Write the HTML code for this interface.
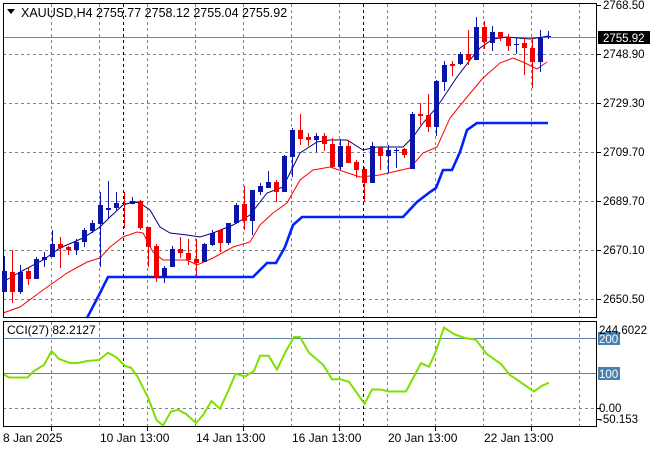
<!DOCTYPE html>
<html><head><meta charset="utf-8"><style>
html,body{margin:0;padding:0;background:#fff;width:660px;height:450px;overflow:hidden}
svg{display:block}
text{font-family:"Liberation Sans",sans-serif;font-size:11.5px;fill:#000}
</style></head><body>
<svg width="660" height="450" viewBox="0 0 660 450" xmlns="http://www.w3.org/2000/svg">
<rect width="660" height="450" fill="#fff"/>
<g stroke="#7d848c" stroke-width="1" stroke-dasharray="3,3" fill="none">
<path d="M51.5 4V317M99.5 4V317M147.5 4V317M195.5 4V317M243.5 4V317M291.5 4V317M339.5 4V317M387.5 4V317M435.5 4V317M483.5 4V317M531.5 4V317M579.5 4V317"/>
<path d="M3 54.5H596M3 103.5H596M3 152.5H596M3 201.5H596M3 250.5H596M3 299.5H596"/>
<path d="M51.5 322V426M99.5 322V426M147.5 322V426M195.5 322V426M243.5 322V426M291.5 322V426M339.5 322V426M387.5 322V426M435.5 322V426M483.5 322V426M531.5 322V426M579.5 322V426"/>
<path d="M3 408.5H596"/>
</g>
<g stroke="#000" stroke-dasharray="3,3"><path d="M123.5 4V317M363.5 4V317M123.5 322V426M363.5 322V426"/></g>
<path d="M3 37.5H596" stroke="#7d848c"/>
<path d="M3 338.5H596M3 373.5H596" stroke="#5a7fa8"/>
<polyline fill="none" stroke="#000080" stroke-width="1" points="3,282 20,272 43,260 60,248 83,238 100,227 110,217 123,205 133,202 140,203 150,210 160,227 170,233 187,235 200,237 213,233 233,225 250,215 267,193 283,187 293,167 300,153 317,142 330,140 347,140 363,150 377,147 403,147 413,137 423,123 437,107 457,77 470,60 480,48 493,39 507,37 530,39 543,37 548,36"/>
<polyline fill="none" stroke="#ff0000" stroke-width="1" points="3,313 20,307 43,290 67,273 87,262 100,258 110,247 123,237 137,232 143,233 153,252 163,260 187,260 197,265 213,258 233,247 250,242 260,225 273,213 287,203 300,180 313,170 330,167 360,177 380,175 410,168 423,153 437,147 450,118 467,97 483,78 500,63 513,58 523,62 537,69 547,62"/>
<polyline fill="none" stroke="#0022ff" stroke-width="2.6" points="87,318 100,293 108,277 253,277 267,263 276,263 285,247 293,225 302,217 403,217 417,202 430,192 436,188 443,170 452,170 460,152 467,130 477,123 548,123"/>
<polyline fill="none" stroke="#7fe000" stroke-width="2" points="3,374 9,377.5 27.5,377.5 34,371 44,365 51.6,351 59,359 70,363 78,363 87,361 99,360 108,352.7 116,357 125,366 131,367.8 137.5,376.5 148,397.5 156.5,420 163,425.5 171,411.5 178,409.8 186,414 196,423 203,415 211.5,401 220,408.7 228.4,390.5 235.6,373.7 245,376.5 254,371 260,355.8 268.6,355.8 277,369.5 285.5,352 294,337 300,337 309,352.7 323.6,365.3 332,379.3 340.5,379.3 349,381.8 364.6,403.8 372,389.5 380.7,389.5 389,391.5 406,391.5 421,363.2 429,366.7 435.7,352 444,327.5 454.7,334.5 465,338 476,339.8 486.5,353.8 501,364 509.7,374.8 520,381.8 534,391.5 541.5,386 549,382.8"/>
<rect x="3.5" y="3.5" width="593" height="314" fill="none" stroke="#000"/>
<rect x="3.5" y="321.5" width="593" height="105" fill="none" stroke="#000"/>
<g stroke="#000"><path d="M597 5.5h4M597 54.5h4M597 103.5h4M597 152.5h4M597 201.5h4M597 250.5h4M597 299.5h4M597 408.5h4M597 419.5h4M51.5 427v4M147.5 427v4M243.5 427v4M339.5 427v4M435.5 427v4M531.5 427v4"/></g>
<path d="M7 9h8l-4 5z" fill="#000"/>
<text x="21" y="17" style="font-size:12.5px">XAUUSD,H4  2755.77 2758.12 2755.04 2755.92</text>
<text x="603" y="9">2768.50</text>
<rect x="598" y="31" width="52" height="13" fill="#000"/>
<text x="603" y="42" style="fill:#fff">2755.92</text>
<text x="603" y="58">2748.90</text>
<text x="603" y="107">2729.30</text>
<text x="603" y="156">2709.70</text>
<text x="603" y="205">2689.70</text>
<text x="603" y="254">2670.10</text>
<text x="603" y="303">2650.50</text>
<text x="7" y="334" style="font-size:12px">CCI(27) 82.2127</text>
<rect x="598" y="332" width="22" height="13" fill="#4a7fb0"/>
<rect x="598" y="367" width="22" height="13" fill="#4a7fb0"/>
<text x="599" y="334">244.6022</text>
<text x="599" y="343" style="fill:#fff">200</text>
<text x="599" y="378" style="fill:#fff">100</text>
<text x="599" y="412">0.00</text>
<text x="599" y="423">-50.153</text>
<text x="3" y="442" style="font-size:12px">8 Jan 2025</text>
<text x="100" y="442" style="font-size:12px">10 Jan 13:00</text>
<text x="196" y="442" style="font-size:12px">14 Jan 13:00</text>
<text x="292" y="442" style="font-size:12px">16 Jan 13:00</text>
<text x="388" y="442" style="font-size:12px">20 Jan 13:00</text>
<text x="484" y="442" style="font-size:12px">22 Jan 13:00</text>
<g stroke-width="1">
<path stroke="#0a14a8" d="M4.5 256V292M20.5 265V294M36.5 257V279M44.5 252V267M52.5 230V257M76.5 239V255M84.5 228V247M92.5 220V233M100.5 192V267M108.5 181V219M116.5 192V210M132.5 197V204M164.5 266V283M172.5 246V267M204.5 243V262M212.5 230V246M228.5 223V245M236.5 203V224M252.5 190V235M260.5 183V195M268.5 171V188M284.5 155V192M292.5 128V177M316.5 133V152M340.5 139V170M372.5 142V183M388.5 145V173M396.5 148V168M412.5 112V169M436.5 80V136M444.5 61V91M460.5 52V65M476.5 17V60M492.5 26V51M516.5 38V54M540.5 30V72M548.5 31V39"/>
<path stroke="#f00000" d="M12.5 250V303M28.5 267V285M60.5 237V268M68.5 246V255M124.5 192V228M140.5 200V230M148.5 227V267M156.5 244V282M180.5 237V258M188.5 239V265M196.5 239V276M220.5 230V252M244.5 186V230M276.5 180V202M300.5 114V145M308.5 133V146M324.5 133V151M332.5 138V168M348.5 140V163M356.5 160V178M364.5 167V202M380.5 147V170M404.5 148V158M420.5 103V125M428.5 94V132M452.5 61V76M468.5 30V65M484.5 21V49M500.5 32V41M508.5 34V51M524.5 38V75M532.5 38V88"/>
</g>
<g fill="#0a14a8">
<rect x="2" y="271" width="5" height="21"/><rect x="18" y="272" width="5" height="20"/><rect x="34" y="259" width="5" height="20"/><rect x="42" y="257" width="5" height="3"/><rect x="50" y="244" width="5" height="13"/><rect x="74" y="242" width="5" height="8"/><rect x="82" y="230" width="5" height="12"/><rect x="90" y="223" width="5" height="8"/><rect x="98" y="205" width="5" height="19"/><rect x="106" y="208" width="5" height="2"/><rect x="114" y="203" width="5" height="5"/><rect x="130" y="201" width="5" height="3"/><rect x="162" y="268" width="5" height="9"/><rect x="170" y="249" width="5" height="18"/><rect x="202" y="244" width="5" height="18"/><rect x="210" y="233" width="5" height="12"/><rect x="226" y="223" width="5" height="20"/><rect x="234" y="205" width="5" height="18"/><rect x="250" y="190" width="5" height="31"/><rect x="258" y="186" width="5" height="6"/><rect x="266" y="182" width="5" height="6"/><rect x="282" y="156" width="5" height="36"/><rect x="290" y="130" width="5" height="27"/><rect x="314" y="136" width="5" height="4"/><rect x="338" y="146" width="5" height="21"/><rect x="370" y="146" width="5" height="37"/><rect x="386" y="150" width="5" height="6"/><rect x="394" y="150" width="5" height="1"/><rect x="410" y="114" width="5" height="55"/><rect x="434" y="81" width="5" height="46"/><rect x="442" y="65" width="5" height="17"/><rect x="458" y="54" width="5" height="10"/><rect x="474" y="27" width="5" height="33"/><rect x="490" y="32" width="5" height="11"/><rect x="514" y="44" width="5" height="1"/><rect x="538" y="38" width="5" height="24"/><rect x="546" y="36" width="5" height="1"/>
</g>
<g fill="#f00000">
<rect x="10" y="272" width="5" height="20"/><rect x="26" y="271" width="5" height="8"/><rect x="58" y="244" width="5" height="4"/><rect x="66" y="247" width="5" height="3"/><rect x="122" y="203" width="5" height="1"/><rect x="138" y="201" width="5" height="27"/><rect x="146" y="227" width="5" height="20"/><rect x="154" y="246" width="5" height="31"/><rect x="178" y="249" width="5" height="4"/><rect x="186" y="253" width="5" height="7"/><rect x="194" y="259" width="5" height="4"/><rect x="218" y="230" width="5" height="13"/><rect x="242" y="204" width="5" height="17"/><rect x="274" y="182" width="5" height="10"/><rect x="298" y="130" width="5" height="9"/><rect x="306" y="137" width="5" height="3"/><rect x="322" y="136" width="5" height="8"/><rect x="330" y="144" width="5" height="23"/><rect x="346" y="146" width="5" height="17"/><rect x="354" y="162" width="5" height="8"/><rect x="362" y="169" width="5" height="14"/><rect x="378" y="147" width="5" height="9"/><rect x="402" y="149" width="5" height="6"/><rect x="418" y="114" width="5" height="2"/><rect x="426" y="115" width="5" height="12"/><rect x="450" y="64" width="5" height="2"/><rect x="466" y="54" width="5" height="6"/><rect x="482" y="27" width="5" height="15"/><rect x="498" y="32" width="5" height="5"/><rect x="506" y="37" width="5" height="9"/><rect x="522" y="43" width="5" height="5"/><rect x="530" y="48" width="5" height="14"/>
</g>
</svg>
</body></html>
